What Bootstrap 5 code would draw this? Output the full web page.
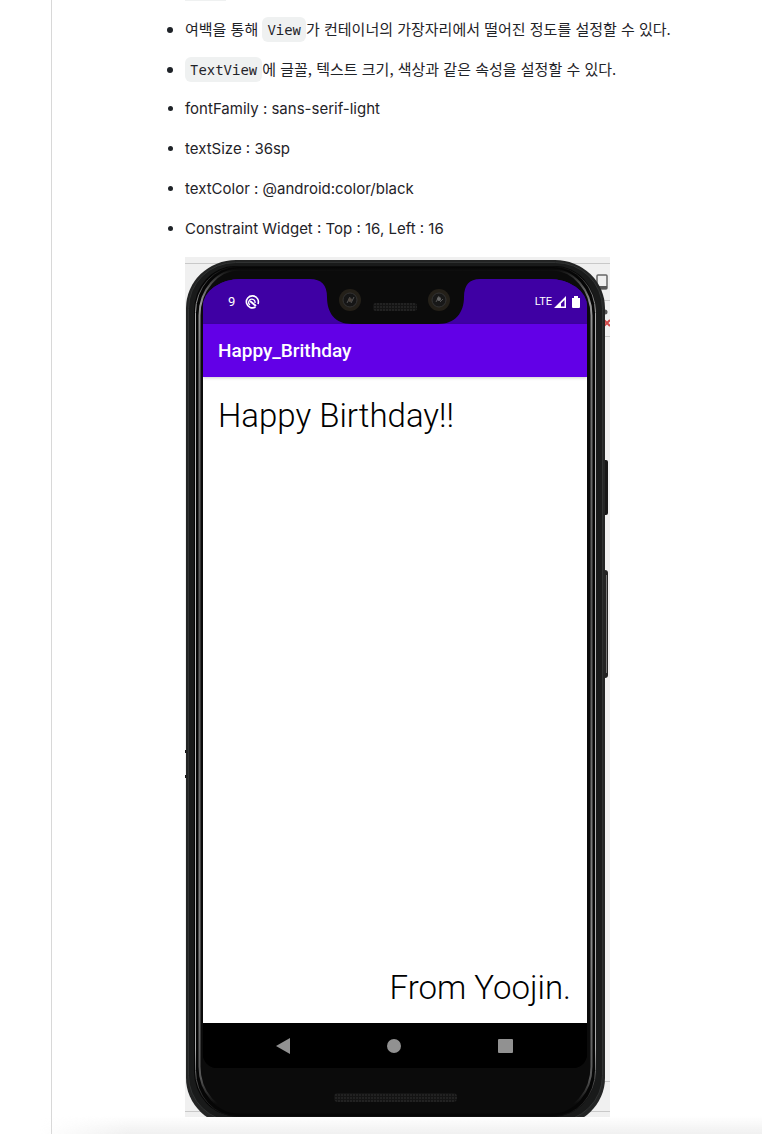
<!DOCTYPE html>
<html lang="ko">
<head>
<meta charset="utf-8">
<meta name="viewport" content="width=device-width, initial-scale=1">
<title>Happy Birthday</title>
<link href="https://cdn.jsdelivr.net/npm/bootstrap@5.3.0/dist/css/bootstrap.min.css" rel="stylesheet">
<script src="https://cdn.jsdelivr.net/npm/bootstrap@5.3.0/dist/js/bootstrap.bundle.min.js" defer></script>
<style>
body { font-family: Inter, "Noto Sans CJK KR", sans-serif; font-size: 15px; line-height: 24px; color: #1f2328; overflow: hidden; }
.doc { margin-left: 51px; border-left: 1px solid #d8d8d8; }
.doc-body { padding-left: 101px; }
.notes { padding-left: 32px; }
.notes li { margin-bottom: 16px; }
.notes .ko { font-family: "Noto Sans CJK KR", sans-serif; }
.notes li.chip-tail { width: 41px; height: 1px; background: #eff1f1; }
.notes code { font-size: 14px; line-height: 16px; font-family: "Noto Sans Mono", "DejaVu Sans Mono", monospace; color: #1f2328; background: #eff1f1; border-radius: 6px; padding: 3px 5px; }
.phone { width: 425px; height: 860px; padding: 22px 23px 49px 18px; }
.screen { font-family: Roboto, sans-serif; border-radius: 38px 38px 14px 14px / 27px 27px 14px 14px; background: linear-gradient(#3f00a4 50%, #000 50%); }
.status { height: 45px; background: #3f00a4; color: #fff; font-size: 13px; padding: 0 7px 0 25px; }
.status .lte { font-size: 11px; }
.appbar { height: 53px; background: #6200e7; color: #fff; font-size: 19px; font-weight: 500; padding-left: 15px; box-shadow: 0 1px 3px #0003; z-index: 1; }
.canvas { background: #fff; color: #000; font-weight: 300; font-size: 33px; line-height: 40px; padding: 19px 16px 15px 15px; }
.softkeys { height: 45px; background: #000; padding: 0 73px; }
.fade-edge { height: 18px; pointer-events: none; background: linear-gradient(#fff0, #e9e9e9aa); -webkit-mask-image: linear-gradient(90deg, transparent 40px, #000 130px); mask-image: linear-gradient(90deg, transparent 40px, #000 130px); }
</style>
</head>
<body>
<main class="doc min-vh-100">
  <div class="doc-body">
    <ul class="notes mb-0">
      <li class="d-block chip-tail" aria-hidden="true"></li>
      <li class="ko">여백을 통해 <code>View</code>가 컨테이너의 가장자리에서 떨어진 정도를 설정할 수 있다.</li>
      <li class="ko"><code>TextView</code>에 글꼴, 텍스트 크기, 색상과 같은 속성을 설정할 수 있다.</li>
      <li>fontFamily : sans-serif-light</li>
      <li>textSize : 36sp</li>
      <li>textColor : @android:color/black</li>
      <li>Constraint Widget : Top : 16, Left : 16</li>
      <li class="d-block">
        <div class="phone position-relative d-flex flex-column">
          <svg class="position-absolute top-0 start-0" width="425" height="860" viewBox="0 0 425 860" aria-hidden="true">
            <defs>
              <linearGradient id="rim" x1="0" y1="0" x2="0" y2="1">
                <stop offset="0" stop-color="#0b0b0b"/><stop offset=".005" stop-color="#222"/><stop offset=".04" stop-color="#999"/><stop offset=".12" stop-color="#777"/><stop offset=".4" stop-color="#555"/><stop offset=".8" stop-color="#888"/><stop offset=".96" stop-color="#555"/><stop offset=".99" stop-color="#0b0b0b"/>
              </linearGradient>
              <linearGradient id="rim2" x1="0" y1="0" x2="0" y2="1">
                <stop offset="0" stop-color="#0b0b0b"/><stop offset=".01" stop-color="#222"/><stop offset=".05" stop-color="#aaa"/><stop offset=".3" stop-color="#bbb"/><stop offset=".92" stop-color="#aaa"/><stop offset=".97" stop-color="#333"/><stop offset="1" stop-color="#0b0b0b"/>
              </linearGradient>
              <pattern id="mesh" width="3" height="3" patternUnits="userSpaceOnUse"><path fill="#141414" d="M0 0h3v3H0z"/><circle cx="1" cy="1" r="1" fill="#262626"/></pattern>
            </defs>
            <path fill="#f0f0f0" d="M0 0h425v860H0z"/>
            <path stroke="#c9c9c9" d="M0 6.500h425M410 43.500h15M410 79.500h15M0 854.500h425M410 824.500h15"/>
            <rect x="412" y="18" width="10" height="14" rx="1" fill="#eee" stroke="#666" stroke-width="1.500"/><path fill="#555" d="M412 29h10v3h-10z"/>
            <circle cx="420" cy="55" r="2.500" fill="#555"/>
            <path d="M419 63l6 6m0-6l-6 6" stroke="#d14a4a" stroke-width="2"/>
            <path fill="#161616" d="M418 203h3q2 0 2 2v51q0 2-2 2h-3z"/>
            <path fill="#222" d="M418 313h2q3 0 3 3v102q0 3-3 3h-2z"/><path stroke="#777" d="M421.500 318v98"/>
            <path fill="#151515" d="M0 493h2v3H0zM0 518h2v3H0z"/>
            <rect x="1" y="3" width="419" height="866" rx="50" ry="48" fill="#232424"/>
            <rect x="3.500" y="5.500" width="414" height="859" rx="47" ry="46" fill="#191a1a" stroke="#303232"/>
            <rect x="9" y="9" width="402" height="850" rx="41" ry="45" fill="#060606"/>
            <rect x="10.500" y="9.500" width="400" height="850" rx="42" ry="46" fill="#060606" stroke="url(#rim2)"/>
            <rect x="14.500" y="12.500" width="392" height="843" rx="40" ry="46" fill="#0b0b0b" stroke="url(#rim)" stroke-width="2"/>
            <rect x="149" y="836" width="123" height="9" rx="4" fill="url(#mesh)"/>
          </svg>
          <div class="screen position-relative flex-grow-1 d-flex flex-column overflow-hidden">
            <div class="status d-flex align-items-center">
              <span>9</span>
              <svg class="ms-2" width="18" height="16" viewBox="0 0 18 16" fill="none" stroke="#fff" aria-hidden="true"><path stroke-width="1.600" d="M12.500 13A6 6 0 1 1 15 10"/><path stroke-width="1.300" d="M7 11A3.200 3.200 0 1 1 12 9"/><path stroke-width="2" d="M7 7l6 5"/></svg>
              <span class="lte ms-auto">LTE</span>
              <svg width="28" height="14" viewBox="0 0 28 14" fill="none" aria-hidden="true"><path fill="#fff" fill-rule="evenodd" d="M2 13L14 1v12zM9 11.500h3.500V5L9 8.500z"/><path fill="#fff" d="M20 3h2V1h4v2h2v9q0 1-1 1h-6q-1 0-1-1z"/></svg>
              <svg class="position-absolute top-0 start-0" width="384" height="45" viewBox="0 0 384 45" aria-hidden="true">
                <path fill="#0b0b0b" d="M107 0Q124 0 124 18C124 34 132 45 149 45H235C252 45 261 34 261 18Q261 0 277 0z"/>
                <g><circle cx="147" cy="21" r="11" fill="#242019"/><circle cx="147" cy="21" r="7" fill="#151515" stroke="#333"/><path stroke="#555" d="M144 24l3-6m1 6l3-6"/><circle cx="147" cy="21" r="2" fill="#4d4640"/></g>
                <g><circle cx="236" cy="21" r="11" fill="#242019"/><circle cx="236" cy="21" r="7" fill="#181818" stroke="#333"/><path stroke="#555" d="M233 23l3-6m1 6l3-3"/><circle cx="236" cy="20" r="2" fill="#666"/></g>
                <rect x="170" y="24" width="44" height="8" rx="3" fill="url(#mesh)"/>
              </svg>
            </div>
            <div class="appbar d-flex align-items-center">Happy_Brithday</div>
            <div class="canvas flex-grow-1 d-flex flex-column justify-content-between">
              <div>Happy Birthday!!</div>
              <div class="align-self-end">From Yoojin.</div>
            </div>
            <div class="softkeys d-flex align-items-center justify-content-between">
              <svg width="14" height="16" viewBox="0 0 14 16" aria-hidden="true"><path fill="#919191" d="M0 8L14 0v16z"/></svg>
              <svg width="14" height="14" viewBox="0 0 14 14" aria-hidden="true"><circle cx="7" cy="7" r="7" fill="#919191"/></svg>
              <svg width="16" height="16" viewBox="0 0 16 16" aria-hidden="true"><rect x="0" y="1" width="15" height="14" rx="1" fill="#919191"/></svg>
            </div>
          </div>
        </div>
      </li>
    </ul>
  </div>
</main>
<div class="fade-edge fixed-bottom" aria-hidden="true"></div>
</body>
</html>
